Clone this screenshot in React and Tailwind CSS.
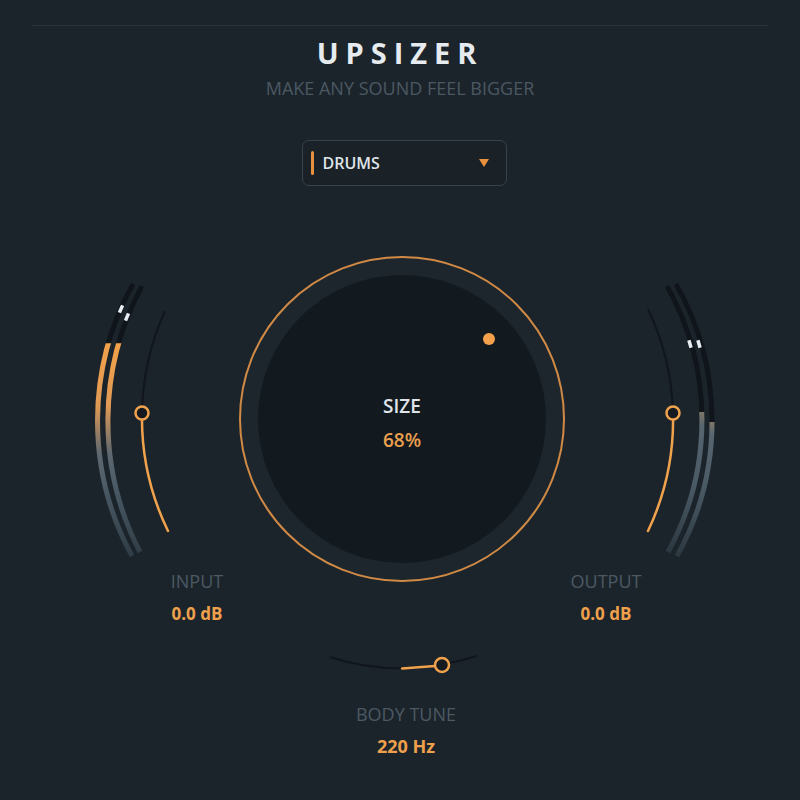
import React from 'react';

const ORANGE = '#f0a24c';

const LeftMeter = () => (
  <svg width="239" height="305" viewBox="0 257 239 305" fill="none">
    <defs>
      <linearGradient id="inA" gradientUnits="userSpaceOnUse" x1="0" y1="285" x2="0" y2="557">
        <stop offset="0" stopColor="#0f151a" />
        <stop offset="0.215" stopColor="#0f151a" />
        <stop offset="0.22" stopColor="#f2a24a" />
        <stop offset="0.45" stopColor="#df9a55" />
        <stop offset="0.62" stopColor="#5f6870" />
        <stop offset="0.75" stopColor="#4a5a65" />
        <stop offset="1" stopColor="#2f3c45" />
      </linearGradient>
    </defs>
    {/* level strips */}
    <path d="M 133 285 A 282 282 0 0 0 132 557" stroke="url(#inA)" strokeWidth="5" />
    <path d="M 142 287 A 284 284 0 0 0 140 553" stroke="url(#inA)" strokeWidth="5" />
    {/* peak marks */}
    <line x1="119.4" y1="313.6" x2="122.6" y2="306.4" stroke="#e8eef2" strokeWidth="3.5" />
    <line x1="125.5" y1="321.6" x2="128.5" y2="314.4" stroke="#e8eef2" strokeWidth="3.5" />
    {/* gain slider */}
    <path d="M 165 312 A 259 259 0 0 0 142 414" stroke="#10161b" strokeWidth="2" />
    <path d="M 142 414 A 259 259 0 0 0 168 532" stroke={ORANGE} strokeWidth="2.5" strokeLinecap="round" />
    <circle cx="142" cy="414" r="6.5" fill="#141a1f" stroke={ORANGE} strokeWidth="2.5" />
  </svg>
);

const RightMeter = () => (
  <svg width="235" height="305" viewBox="565 257 235 305" fill="none">
    <defs>
      <linearGradient id="outA" gradientUnits="userSpaceOnUse" x1="0" y1="287" x2="0" y2="553">
        <stop offset="0" stopColor="#0f151a" />
        <stop offset="0.474" stopColor="#0f151a" />
        <stop offset="0.475" stopColor="#7e7668" />
        <stop offset="0.53" stopColor="#566570" />
        <stop offset="0.75" stopColor="#4a5a65" />
        <stop offset="1" stopColor="#2c3840" />
      </linearGradient>
      <linearGradient id="outB" gradientUnits="userSpaceOnUse" x1="0" y1="285" x2="0" y2="557">
        <stop offset="0" stopColor="#0f151a" />
        <stop offset="0.507" stopColor="#0f151a" />
        <stop offset="0.508" stopColor="#7e7668" />
        <stop offset="0.56" stopColor="#566570" />
        <stop offset="0.75" stopColor="#4a5a65" />
        <stop offset="1" stopColor="#2c3840" />
      </linearGradient>
    </defs>
    <path d="M 667 287 A 274 274 0 0 1 668 553" stroke="url(#outA)" strokeWidth="5" />
    <path d="M 676 285 A 278 278 0 0 1 677 557" stroke="url(#outB)" strokeWidth="5" />
    <line x1="688.9" y1="341.2" x2="691.1" y2="348.8" stroke="#e8eef2" strokeWidth="3.5" />
    <line x1="697.9" y1="341.2" x2="700.1" y2="348.8" stroke="#e8eef2" strokeWidth="3.5" />
    <path d="M 648 310 A 259 259 0 0 1 673 414" stroke="#10161b" strokeWidth="2" />
    <path d="M 673 414 A 259 259 0 0 1 648 532" stroke={ORANGE} strokeWidth="2.5" strokeLinecap="round" />
    <circle cx="673" cy="414" r="6.5" fill="#141a1f" stroke={ORANGE} strokeWidth="2.5" />
  </svg>
);

const BodyTune = () => (
  <svg width="160" height="30" viewBox="322 648 160 30" fill="none">
    <path d="M 330 657 Q 400 680 477 656" stroke="#10161b" strokeWidth="2" />
    <path d="M 402 668.5 L 435 666" stroke={ORANGE} strokeWidth="2.5" strokeLinecap="round" />
    <circle cx="442" cy="665" r="7" fill="#141a1f" stroke={ORANGE} strokeWidth="2.5" />
  </svg>
);

export default function App() {
  return (
    <div className="w-[800px] h-[800px] bg-[#1c242b] flex flex-col items-center font-['Open_Sans',sans-serif] overflow-hidden">
      <div className="mt-[25px] w-[736px] h-px bg-[#263139]" />

      <h1 className="mt-[12px] text-[29px] leading-[30px] font-bold tracking-[0.24em] text-[#e6ebef]">
        UPSIZER
      </h1>
      <p className="mt-[8px] text-[18px] leading-[24px] text-[#4b5862]">MAKE ANY SOUND FEEL BIGGER</p>

      <button className="mt-[40px] ml-[8px] w-[205px] h-[46px] rounded-[7px] border border-[#37434c] bg-[#1a2127] flex items-center pl-[8px] pr-[17px]">
        <span className="w-[3px] h-[24px] rounded-full bg-[#e8913f]" />
        <span className="ml-[9px] text-[16px] font-semibold text-[#dfe5ea]">DRUMS</span>
        <span className="ml-auto w-0 h-0 border-l-[5px] border-r-[5px] border-t-[8px] border-l-transparent border-r-transparent border-t-[#e8913f]" />
      </button>

      <div className="mt-[70px] w-[800px] grid grid-cols-[239px_326px_235px] items-start">
        <div className="flex flex-col">
          <LeftMeter />
          <div className="ml-[137px] w-[120px] flex flex-col items-center">
            <span className="mt-[8px] text-[18px] leading-[24px] font-medium text-[#4b5963]">INPUT</span>
            <span className="mt-[9px] text-[17px] leading-[24px] font-bold text-[#eea04c]">0.0 dB</span>
          </div>
        </div>

        <div className="w-[326px] h-[326px] rounded-full border-2 border-[#d08a45] bg-[#1d262d] flex items-center justify-center">
          <div className="relative w-[288px] h-[288px] rounded-full bg-[#131a1f] flex flex-col items-center justify-center gap-2 pt-2">
            <span className="absolute left-[225px] top-[58px] w-[12px] h-[12px] rounded-full bg-[#f5a04a]" />
            <span className="text-[19px] leading-[26px] font-semibold text-[#e0e5ea]">SIZE</span>
            <span className="text-[19px] leading-[26px] font-semibold text-[#eca04e]">68%</span>
          </div>
        </div>

        <div className="flex flex-col">
          <RightMeter />
          <div className="w-[82px] flex flex-col items-center">
            <span className="mt-[8px] text-[18px] leading-[24px] font-medium text-[#4b5963]">OUTPUT</span>
            <span className="mt-[9px] text-[17px] leading-[24px] font-bold text-[#eea04c]">0.0 dB</span>
          </div>
        </div>
      </div>

      <div className="mt-[22px] ml-[4px]">
        <BodyTune />
      </div>
      <div className="ml-[12px] flex flex-col items-center">
        <span className="mt-[24px] text-[18px] leading-[24px] font-medium text-[#4b5963]">BODY TUNE</span>
        <span className="mt-[8px] text-[18px] leading-[24px] font-bold text-[#eea04c]">220 Hz</span>
      </div>
    </div>
  );
}
